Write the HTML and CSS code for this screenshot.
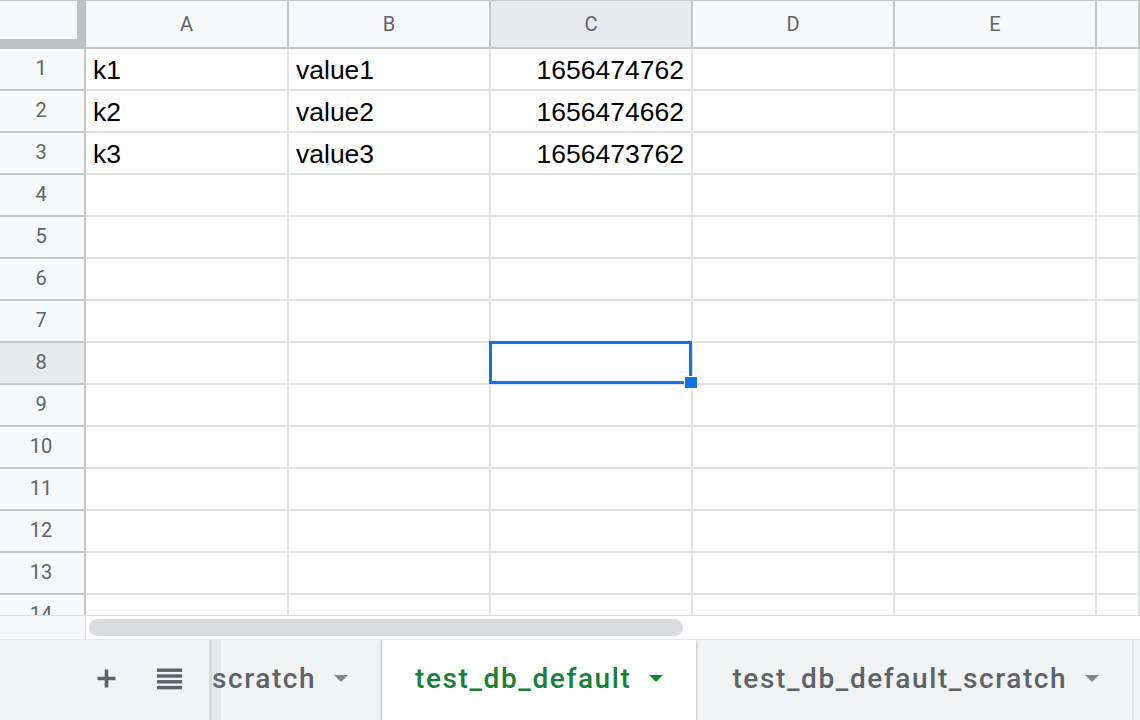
FILE: index.html
```html
<!DOCTYPE html>
<html lang="en">
<head>
<meta charset="utf-8">
<title>Sheet</title>
<link rel="stylesheet" href="styles.css">
</head>
<body>
<div class="app">
  <div class="sheet">
    <div class="row head">
      <div class="corner"></div>
      <div class="ch col-a">A</div>
      <div class="ch">B</div>
      <div class="ch sel">C</div>
      <div class="ch">D</div>
      <div class="ch">E</div>
      <div class="ch last"></div>
    </div>
    <div class="row">
      <div class="rh">1</div>
      <div class="c col-a">k1</div>
      <div class="c">value1</div>
      <div class="c num">1656474762</div>
      <div class="c"></div><div class="c"></div><div class="c last"></div>
    </div>
    <div class="row">
      <div class="rh">2</div>
      <div class="c col-a">k2</div>
      <div class="c">value2</div>
      <div class="c num">1656474662</div>
      <div class="c"></div><div class="c"></div><div class="c last"></div>
    </div>
    <div class="row">
      <div class="rh">3</div>
      <div class="c col-a">k3</div>
      <div class="c">value3</div>
      <div class="c num">1656473762</div>
      <div class="c"></div><div class="c"></div><div class="c last"></div>
    </div>
    <div class="row">
      <div class="rh">4</div>
      <div class="c col-a"></div><div class="c"></div><div class="c"></div><div class="c"></div><div class="c"></div><div class="c last"></div>
    </div>
    <div class="row">
      <div class="rh">5</div>
      <div class="c col-a"></div><div class="c"></div><div class="c"></div><div class="c"></div><div class="c"></div><div class="c last"></div>
    </div>
    <div class="row">
      <div class="rh">6</div>
      <div class="c col-a"></div><div class="c"></div><div class="c"></div><div class="c"></div><div class="c"></div><div class="c last"></div>
    </div>
    <div class="row">
      <div class="rh">7</div>
      <div class="c col-a"></div><div class="c"></div><div class="c"></div><div class="c"></div><div class="c"></div><div class="c last"></div>
    </div>
    <div class="row">
      <div class="rh sel">8</div>
      <div class="c col-a"></div><div class="c"></div>
      <div class="c active"><div class="selbox"></div><div class="handle"></div></div>
      <div class="c"></div><div class="c"></div><div class="c last"></div>
    </div>
    <div class="row">
      <div class="rh">9</div>
      <div class="c col-a"></div><div class="c"></div><div class="c"></div><div class="c"></div><div class="c"></div><div class="c last"></div>
    </div>
    <div class="row">
      <div class="rh">10</div>
      <div class="c col-a"></div><div class="c"></div><div class="c"></div><div class="c"></div><div class="c"></div><div class="c last"></div>
    </div>
    <div class="row">
      <div class="rh">11</div>
      <div class="c col-a"></div><div class="c"></div><div class="c"></div><div class="c"></div><div class="c"></div><div class="c last"></div>
    </div>
    <div class="row">
      <div class="rh">12</div>
      <div class="c col-a"></div><div class="c"></div><div class="c"></div><div class="c"></div><div class="c"></div><div class="c last"></div>
    </div>
    <div class="row">
      <div class="rh">13</div>
      <div class="c col-a"></div><div class="c"></div><div class="c"></div><div class="c"></div><div class="c"></div><div class="c last"></div>
    </div>
    <div class="row">
      <div class="rh">14</div>
      <div class="c col-a"></div><div class="c"></div><div class="c"></div><div class="c"></div><div class="c"></div><div class="c last"></div>
    </div>
  </div>

  <div class="hscroll">
    <div class="hs-gutter"></div>
    <div class="hs-track"><div class="hs-thumb"></div></div>
  </div>

  <div class="tabbar">
    <div class="tools">
      <div class="tool add">
        <svg width="21" height="21" viewBox="0 0 21 21"><path d="M10.5 1.5v18M1.5 10.5h18" stroke="#5f6368" stroke-width="3.6" fill="none"/></svg>
      </div>
      <div class="tool list">
        <svg width="25" height="22" viewBox="0 0 25 22"><rect x="0" y="0.5" width="25" height="3.4" fill="#5f6368"/><rect x="0" y="6.3" width="25" height="3.4" fill="#5f6368"/><rect x="0" y="12.1" width="25" height="3.4" fill="#5f6368"/><rect x="0" y="17.9" width="25" height="3.4" fill="#5f6368"/></svg>
      </div>
    </div>
    <div class="tabs">
      <div class="tab partial"><span class="tab-name">scratch</span><span class="caret"></span></div>
      <div class="tab active"><span class="tab-name">test_db_default</span><span class="caret"></span></div>
      <div class="tab"><span class="tab-name">test_db_default_scratch</span><span class="caret"></span></div>
      <div class="tabs-fade"></div>
    </div>
  </div>
</div>
</body>
</html>
```

FILE: styles.css
```css
* { box-sizing: border-box; }

html, body {
  margin: 0;
  padding: 0;
  background: #ffffff;
}

.app {
  width: 1140px;
  height: 720px;
  overflow: hidden;
  display: flex;
  flex-direction: column;
  font-family: Roboto, "Liberation Sans", Arial, sans-serif;
}

.sheet {
  height: 615px;
  flex: none;
  overflow: hidden;
}

.row {
  display: flex;
  height: 42px;
}

.row.head {
  height: 49px;
}

.corner {
  width: 86px;
  flex: none;
  background: #f8f9fa;
  border-top: 1px solid #c4c7c5;
  border-right: 9px solid #bfc1c3;
  border-bottom: 10px solid #bfc1c3;
}

.ch {
  width: 202px;
  flex: none;
  background: #f8f9fa;
  border-top: 1px solid #c4c7c5;
  border-right: 2px solid #c4c7c5;
  border-bottom: 2px solid #c4c7c5;
  display: flex;
  align-items: center;
  justify-content: center;
  font-size: 20px;
  color: #5f6368;
}

.rh {
  width: 86px;
  flex: none;
  background: #f8f9fa;
  border-right: 2px solid #c4c7c5;
  border-bottom: 2px solid #c4c7c5;
  display: flex;
  align-items: center;
  justify-content: center;
  font-size: 20px;
  color: #5f6368;
  padding: 0 2px 3px 0;
}

.ch.sel, .rh.sel {
  background: #e8eaed;
}

.c {
  width: 202px;
  flex: none;
  border-right: 2px solid #e2e3e3;
  border-bottom: 2px solid #e2e3e3;
  font-family: "Liberation Sans", Arial, sans-serif;
  font-size: 26.5px;
  line-height: 40px;
  color: #000000;
  padding: 1px 7px 0 7px;
  white-space: nowrap;
}

.col-a { width: 203px; }

.last { flex: 1; width: auto; }

.num { text-align: right; }

.c.active { position: relative; }

.selbox {
  position: absolute;
  left: -2px;
  top: -2px;
  width: 203px;
  height: 43px;
  border: 3px solid #1274e4;
  z-index: 2;
}

.handle {
  position: absolute;
  left: 193px;
  top: 33px;
  width: 14px;
  height: 13px;
  background: #1274e4;
  border: 1px solid #ffffff;
  z-index: 3;
}

/* horizontal scrollbar */
.hscroll {
  height: 24px;
  flex: none;
  display: flex;
  border-top: 1px solid #dadce0;
}

.hs-gutter {
  width: 86px;
  flex: none;
  background: #f8f9fa;
  border-right: 1px solid #e2e3e3;
}

.hs-track {
  flex: 1;
  padding: 3px 0 0 3px;
  background: #ffffff;
}

.hs-thumb {
  width: 594px;
  height: 17px;
  border-radius: 9px;
  background: #dadce0;
}

/* tab bar */
.tabbar {
  height: 81px;
  flex: none;
  display: flex;
  background: #f1f3f4;
  border-top: 1px solid #e3e5e7;
}

.tools {
  width: 209px;
  flex: none;
  display: flex;
  align-items: center;
  gap: 40px;
  padding-left: 96px;
  padding-bottom: 3px;
}

.tool {
  display: flex;
  align-items: center;
  justify-content: center;
}

.tool svg { display: block; }

.tabs {
  flex: 1;
  display: flex;
  position: relative;
  overflow: hidden;
}

.tab {
  flex: none;
  display: flex;
  align-items: center;
  padding: 0 33px 3px 36px;
  font-size: 28px;
  font-weight: 500;
  letter-spacing: 1.6px;
  color: #5f6368;
  border-right: 2px solid #e3e5e7;
  white-space: nowrap;
}

.tab.partial {
  width: 173px;
  padding-left: 3px;
  padding-right: 0;
  border-right: none;
}

.tab.active {
  background: #ffffff;
  color: #188038;
  padding-left: 33px;
  padding-right: 33px;
  border-right: none;
  box-shadow: 0 1px 3px 1px rgba(60, 64, 67, 0.15), 0 1px 2px 0 rgba(60, 64, 67, 0.3);
  position: relative;
  z-index: 1;
}

.caret {
  width: 0;
  height: 0;
  margin-left: 18px;
  border-left: 7px solid transparent;
  border-right: 7px solid transparent;
  border-top: 7px solid #80868b;
}

.tab.active .caret {
  border-top-color: #188038;
}

.tabs-fade {
  position: absolute;
  left: 0;
  top: 0;
  bottom: 0;
  width: 12px;
  background: linear-gradient(to right, rgba(120, 124, 128, 0.22) 0, rgba(120, 124, 128, 0.22) 3px, rgba(160, 164, 168, 0.14) 3px, rgba(160, 164, 168, 0.1) 12px);
  z-index: 2;
}
```
